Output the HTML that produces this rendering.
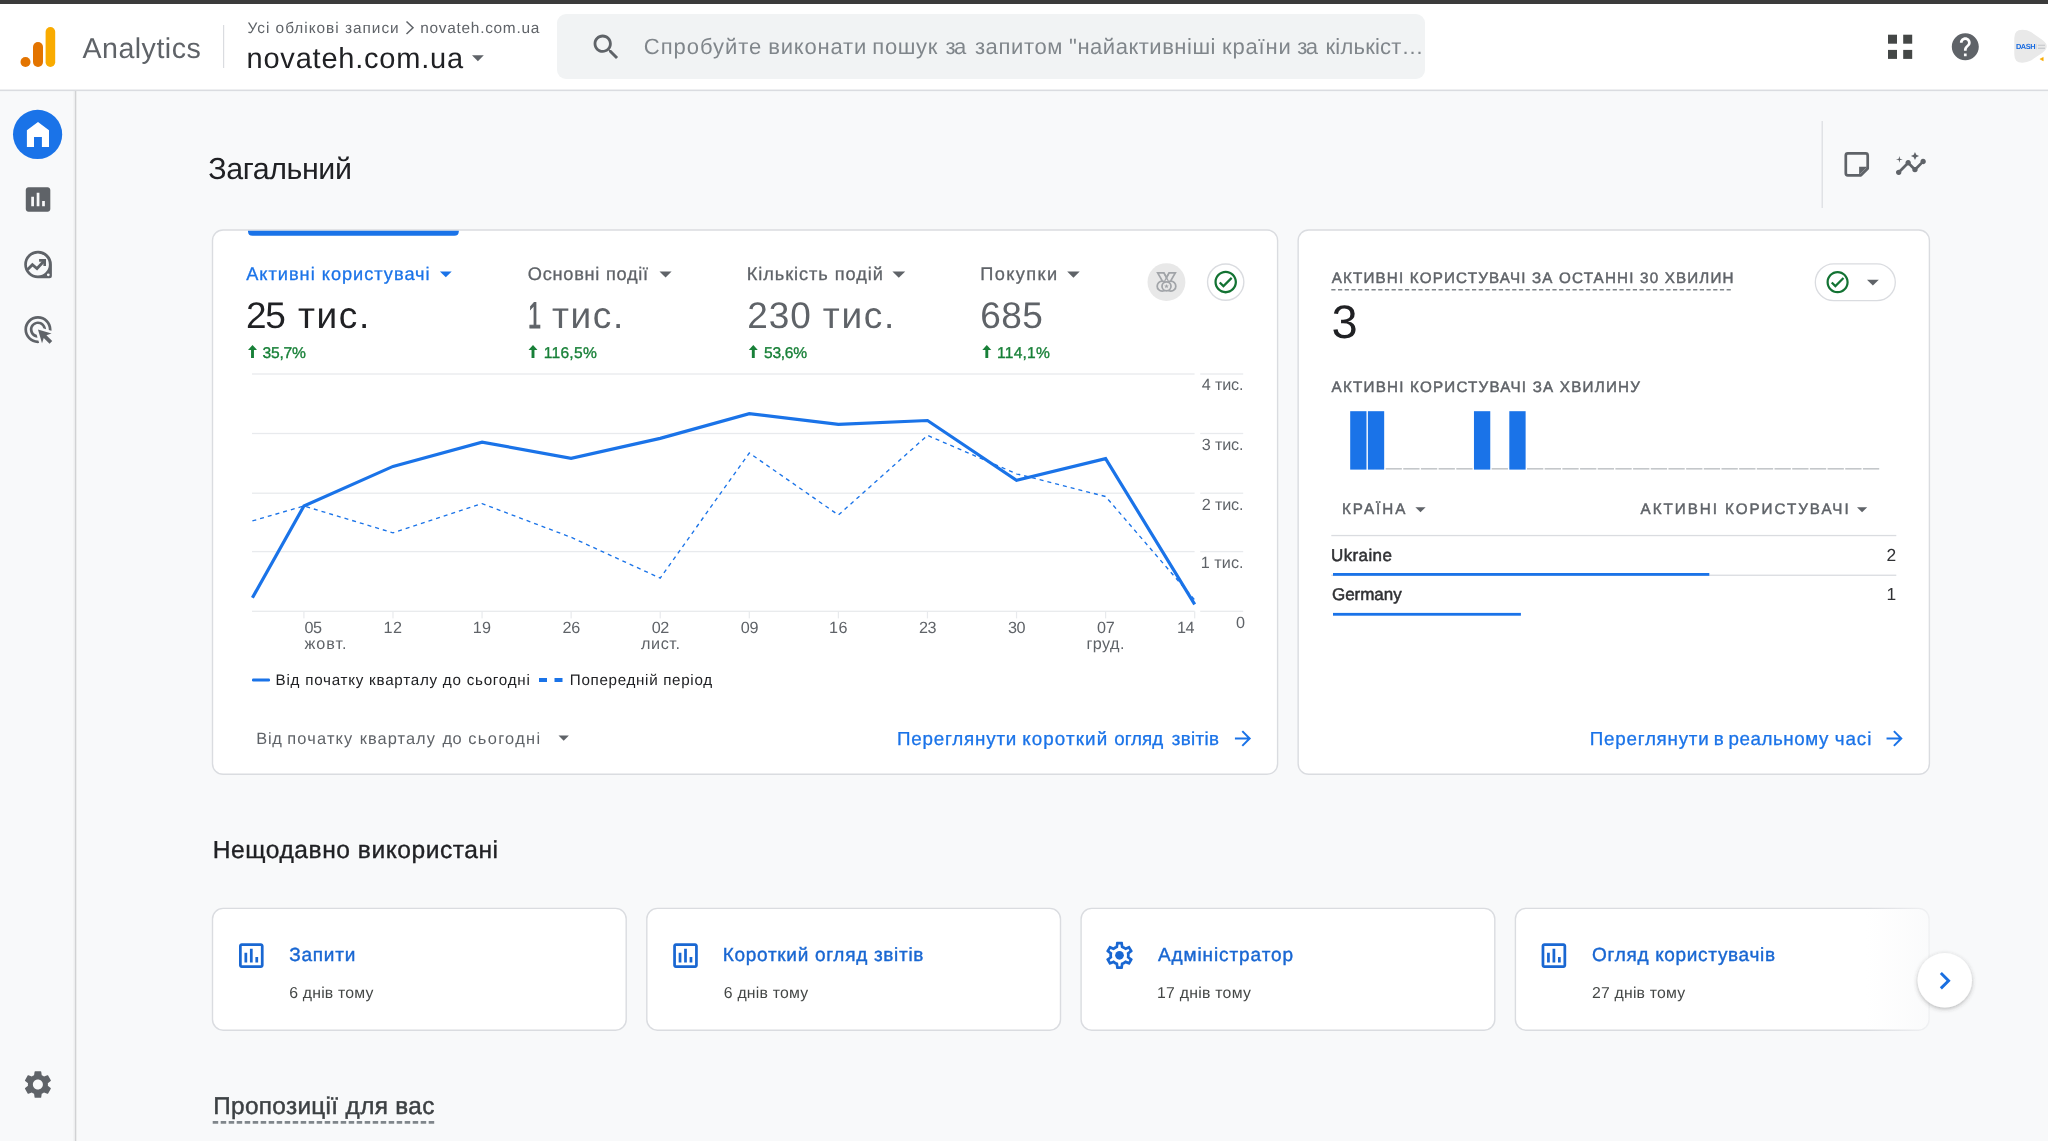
<!DOCTYPE html>
<html lang="uk">
<head>
<meta charset="utf-8">
<title>Analytics | Загальний</title>
<style>
html,body{margin:0;padding:0;}
body{width:2048px;height:1141px;overflow:hidden;background:#f8f9fa;position:relative;font-family:"Liberation Sans",sans-serif;}
.t{position:absolute;white-space:nowrap;line-height:1;font-family:"Liberation Sans",sans-serif;}
.abs{position:absolute;}
#topbar{left:0;top:0;width:2048px;height:3.5px;background:#3b3b3b;}
#header{left:0;top:3.5px;width:2048px;height:86.5px;background:#fff;}
#sidebar{left:0;top:91px;width:75px;height:1050px;background:#f8f9fa;}
#search{left:556.7px;top:14px;width:868.8px;height:65px;background:#f1f3f4;border-radius:9px;}
.card{box-sizing:border-box;}
#card1{left:211.7px;top:229.5px;width:1066.7px;height:545px;overflow:hidden;}
#card2{left:1297.8px;top:229.5px;width:631.8px;height:545px;}
.rc{top:908px;width:415.4px;height:123px;}
svg.ov{position:absolute;left:0;top:0;}
h1{margin:0;font-weight:400;font-size:inherit;}
header,section,aside,h1{display:block;}
</style>
</head>
<body>
<div id="topbar" class="abs"></div>
<div id="header" class="abs"></div>
<div id="search" class="abs"></div>
<div id="sidebar" class="abs"></div>
<div id="card1" class="abs card"></div>
<div id="card2" class="abs card"></div>
<div class="abs card rc" style="left:211.7px"></div>
<div class="abs card rc" style="left:645.9px"></div>
<div class="abs card rc" style="left:1080.1px"></div>
<div class="abs card rc" style="left:1514.3px"></div>
<svg class="ov" width="2048" height="1141" viewBox="0 0 2048 1141">
<defs><linearGradient id="sbsh" x1="0" x2="1" y1="0" y2="0"><stop offset="0" stop-color="#000" stop-opacity="0"/><stop offset="1" stop-color="#000" stop-opacity=".06"/></linearGradient></defs>
<rect x="72.6" y="91" width="2.6" height="1050" fill="url(#sbsh)"/>
<rect x="75.05" y="91" width="1.25" height="1050" fill="#cfd0d2"/>
<rect x="0" y="89.55" width="2048" height="1.55" fill="#dadce0"/>
<rect x="212.5" y="230" width="1065.1" height="544.3" rx="10.6" fill="#fff" stroke="#dadce0" stroke-width="1.4"/>
<rect x="1298.15" y="230" width="631.25" height="544.3" rx="10.6" fill="#fff" stroke="#dadce0" stroke-width="1.4"/>
<path d="M248 230.7 H458.8 V231.3 Q458.8 235.8 454.3 235.8 H252.5 Q248 235.8 248 231.3z" fill="#1a73e8"/>
<rect x="212.50" y="908.4" width="413.7" height="121.8" rx="10.6" fill="#fff" stroke="#dadce0" stroke-width="1.4"/>
<rect x="646.80" y="908.4" width="413.7" height="121.8" rx="10.6" fill="#fff" stroke="#dadce0" stroke-width="1.4"/>
<rect x="1081.10" y="908.4" width="413.7" height="121.8" rx="10.6" fill="#fff" stroke="#dadce0" stroke-width="1.4"/>
<rect x="1515.40" y="908.4" width="413.7" height="121.8" rx="10.6" fill="#fff" stroke="#dadce0" stroke-width="1.4"/>
<defs><linearGradient id="fade" x1="0" x2="1" y1="0" y2="0"><stop offset="0" stop-color="#f8f9fa" stop-opacity="0"/><stop offset="1" stop-color="#f8f9fa" stop-opacity="1"/></linearGradient><filter id="sh" x="-30%" y="-30%" width="160%" height="170%"><feDropShadow dx="0" dy="1.4" stdDeviation="2" flood-color="#3c4043" flood-opacity=".38"/></filter></defs>
<rect x="1866" y="900" width="77" height="140" fill="url(#fade)" opacity=".88"/>
<circle cx="1944.8" cy="980.3" r="27.2" fill="#fff" filter="url(#sh)"/>
<circle cx="25.5" cy="62" r="5" fill="#e37400"/>
<rect x="33" y="42" width="10" height="25" rx="5" fill="#e37400"/>
<rect x="45.6" y="27" width="9.6" height="40" rx="4.8" fill="#f9ab00"/>
<rect x="223" y="25" width="1.2" height="43" fill="#dadce0"/>
<path d="M406.5 21.5 L413 27.8 L406.5 34" fill="none" stroke="#5f6368" stroke-width="1.5"/>
<path d="M472 55.3 h11.8 l-5.9 6z" fill="#5f6368"/>
<g transform="translate(589.40 30.40) scale(1.4000)" fill="#5f6368" ><path d="M15.5 14h-.79l-.28-.27C15.41 12.59 16 11.11 16 9.5 16 5.91 13.09 3 9.5 3S3 5.91 3 9.5 5.91 16 9.5 16c1.61 0 3.09-.59 4.23-1.57l.27.28v.79l5 4.99L20.49 19l-4.99-5zm-6 0C7.01 14 5 11.99 5 9.5S7.01 5 9.5 5 14 7.01 14 9.5 11.99 14 9.5 14z"/></g>
<rect x="1888" y="34.7" width="9" height="9" fill="#444746"/>
<rect x="1888" y="49.9" width="9" height="9" fill="#444746"/>
<rect x="1903.2" y="34.7" width="9" height="9" fill="#444746"/>
<rect x="1903.2" y="49.9" width="9" height="9" fill="#444746"/>
<g transform="translate(1949.10 30.50) scale(1.3500)" fill="#5f6368" ><path d="M12 2C6.48 2 2 6.48 2 12s4.48 10 10 10 10-4.48 10-10S17.52 2 12 2zm1 17h-2v-2h2v2zm2.07-7.75l-.9.92C13.45 12.9 13 13.5 13 15h-2v-.5c0-1.1.45-2.1 1.17-2.83l1.24-1.26c.37-.36.59-.86.59-1.41 0-1.1-.9-2-2-2s-2 .9-2 2H8c0-2.21 1.79-4 4-4s4 1.79 4 4c0 .88-.36 1.68-.93 2.25z"/></g>
<path d="M2014.3 38 Q2014.3 29.6 2022.5 29.8 Q2027 29.9 2031 32 L2042.5 39.9 Q2046.8 43.2 2046.8 46.3 Q2046.8 49.4 2042.5 52.7 L2031 60.5 Q2027 62.6 2022.5 62.7 Q2014.3 62.9 2014.3 54.5 Z" fill="#e9e9e9"/>
<path d="M2043.3 57.3 V60.9 L2039.9 59.1z" fill="#f9ab00" stroke="#f9ab00" stroke-width="0.4" stroke-linejoin="round"/>
<rect x="2036.4" y="43.8" width="0.5" height="5.6" fill="#c4c7ca"/><rect x="2038" y="44.7" width="7" height="1.2" fill="#c9cbce"/><rect x="2038" y="47.6" width="7" height="1.4" fill="#c9cbce"/>
<circle cx="37.6" cy="134.4" r="24.6" fill="#1a73e8"/>
<path d="M38 121.9 L26.9 130.3 V146.9 H34 V137 H41.9 V146.9 H49 V130.3z" fill="#fff"/>
<g transform="translate(21.70 183.20) scale(1.3625)" fill="#5f6368" ><path d="M19 3H5c-1.1 0-2 .9-2 2v14c0 1.1.9 2 2 2h14c1.1 0 2-.9 2-2V5c0-1.1-.9-2-2-2zM9 17H7v-7h2v7zm4 0h-2V7h2v10zm4 0h-2v-4h2v4z"/></g>
<path fill-rule="evenodd" fill="#5f6368" d="M37.9 250.8 A13.7 13.7 0 1 0 37.9 278.2 H49.4 Q51.9 278.2 51.9 275.7 V264.5 A13.7 13.7 0 0 0 37.9 250.8 Z M37.9 253.5 a11 11 0 1 1 0 22 a11 11 0 1 1 0 -22 Z M48.3 273.4 a1.4 1.4 0 1 1 0 2.8 a1.4 1.4 0 1 1 0 -2.8z"/>
<polyline points="27.6,269.6 32.4,264.7 37,268.5 44.3,260.8" fill="none" stroke="#5f6368" stroke-width="2.8"/>
<path d="M39.1 259.1 H46 V265.9 H43.4 V261.7 H39.1z" fill="#5f6368"/>
<g transform="translate(21.65 313.25) scale(1.3583)" fill="#5f6368" ><path d="M11.71 17.99C8.53 17.84 6 15.22 6 12c0-3.31 2.69-6 6-6 3.22 0 5.84 2.53 5.99 5.71l-2.1-.63C15.48 9.31 13.89 8 12 8c-2.21 0-4 1.79-4 4 0 1.89 1.31 3.48 3.08 3.89l.63 2.1zM22 12c0 .3-.01.6-.04.9l-1.97-.59c.01-.1.01-.21.01-.31 0-4.42-3.58-8-8-8s-8 3.58-8 8 3.58 8 8 8c.1 0 .21 0 .31-.01l.59 1.97c-.3.03-.6.04-.9.04-5.52 0-10-4.48-10-10S6.48 2 12 2s10 4.48 10 10zm-3.77 4.26L22 15l-10-3 3 10 1.26-3.77 4.27 4.27 1.98-1.98-4.28-4.26z"/></g>
<g transform="translate(21.20 1067.80) scale(1.3917)" fill="#5f6368" ><path d="M19.14 12.94c.04-.3.06-.61.06-.94 0-.32-.02-.64-.07-.94l2.03-1.58c.18-.14.23-.41.12-.61l-1.92-3.32c-.12-.22-.37-.29-.59-.22l-2.39.96c-.5-.38-1.03-.7-1.62-.94l-.36-2.54c-.04-.24-.24-.41-.48-.41h-3.84c-.24 0-.43.17-.47.41l-.36 2.54c-.59.24-1.13.57-1.62.94l-2.39-.96c-.22-.08-.47 0-.59.22L2.74 8.87c-.12.21-.08.47.12.61l2.03 1.58c-.05.3-.09.63-.09.94s.02.64.07.94l-2.03 1.58c-.18.14-.23.41-.12.61l1.92 3.32c.12.22.37.29.59.22l2.39-.96c.5.38 1.03.7 1.62.94l.36 2.54c.05.24.24.41.48.41h3.84c.24 0 .44-.17.47-.41l.36-2.54c.59-.24 1.13-.56 1.62-.94l2.39.96c.22.08.47 0 .59-.22l1.92-3.32c.12-.22.07-.47-.12-.61l-2.01-1.58zM12 15.6c-1.98 0-3.6-1.62-3.6-3.6s1.62-3.6 3.6-3.6 3.6 1.62 3.6 3.6-1.62 3.6-3.6 3.6z"/></g>
<rect x="1821.6" y="121" width="1.2" height="87" fill="#dadce0"/>
<g transform="translate(1844.4 152)" fill="none" stroke="#5f6368" stroke-width="2.7" stroke-linejoin="round"><path d="M3.4 1.4 H21.2 Q23.3 1.4 23.3 3.5 V16.5 L16.5 23.3 H3.4 Q1.4 23.3 1.4 21.2 V3.5 Q1.4 1.4 3.4 1.4z"/><path d="M14.7 23 V14.7 H23z" fill="#5f6368" stroke="none"/></g>
<g transform="translate(1894.60 147.90) scale(1.3583)" fill="#5f6368" ><path d="M21 8c-1.45 0-2.26 1.44-1.93 2.51l-3.55 3.56c-.3-.09-.74-.09-1.04 0l-2.55-2.55C12.27 10.45 11.46 9 10 9c-1.45 0-2.27 1.44-1.93 2.52l-4.56 4.55C2.44 15.74 1 16.55 1 18c0 1.1.9 2 2 2 1.45 0 2.26-1.44 1.93-2.51l4.55-4.56c.3.09.74.09 1.04 0l2.55 2.55C12.73 16.55 13.54 18 15 18c1.45 0 2.27-1.44 1.93-2.52l3.56-3.55c1.07.33 2.51-.48 2.51-1.93 0-1.1-.9-2-2-2z"/><path d="M15 9l.94-2.07L18 6l-2.06-.93L15 3l-.92 2.07L12 6l2.08.93z"/><path d="M3.5 11L4 9l2-.5L4 8l-.5-2L3 8l-2 .5L3 9z"/></g>
<path d="M439.9 271.4 h11.8 l-5.90 5.90z" fill="#1a73e8"/>
<path d="M659.5 271.4 h12.1 l-6.05 6.05z" fill="#5f6368"/>
<path d="M892.4 271.4 h12.8 l-6.40 6.40z" fill="#5f6368"/>
<path d="M1067.2 271.4 h12.5 l-6.25 6.25z" fill="#5f6368"/>
<path d="M252.50 344.9 L257.00 349.9 H253.95 V357.9 H251.05 V349.9 H248.00z" fill="#188038"/>
<path d="M533.00 344.9 L537.50 349.9 H534.45 V357.9 H531.55 V349.9 H528.50z" fill="#188038"/>
<path d="M753.30 344.9 L757.80 349.9 H754.75 V357.9 H751.85 V349.9 H748.80z" fill="#188038"/>
<path d="M986.80 344.9 L991.30 349.9 H988.25 V357.9 H985.35 V349.9 H982.30z" fill="#188038"/>
<circle cx="1166.45" cy="282.1" r="18.95" fill="#e8e8e8"/>
<g fill="none" stroke="#a1a4a8" stroke-width="1.75"><path d="M1162.3 280.9 L1157.7 272.9 H1163.9 L1166.5 277.7 L1169.1 272.9 H1175.3 L1170.7 280.9"/><path d="M1163.9 272.9 L1168.3 281 M1169.1 272.9 L1164.7 281" stroke-width="1.3"/><circle cx="1162.2" cy="286.2" r="5.0"/><circle cx="1170.8" cy="286.2" r="5.0"/><circle cx="1166.5" cy="286.3" r="4.5" fill="#e8e8e8"/></g>
<path d="M1166.5 283.9 l0.62 1.55 1.66 0.12 -1.28 1.07 0.41 1.62 -1.41 -0.89 -1.41 0.89 0.41 -1.62 -1.28 -1.07 1.66 -0.12z" fill="#a1a4a8"/>
<circle cx="1225.7" cy="282.1" r="18.15" fill="#fff" stroke="#dadce0" stroke-width="1.4"/>
<g transform="translate(1212.17 268.57) scale(1.1275)" fill="#137333" ><path d="M12 2C6.48 2 2 6.48 2 12s4.48 10 10 10 10-4.48 10-10S17.52 2 12 2zm0 18c-4.41 0-8-3.59-8-8s3.590-8 8-8 8 3.590 8 8-3.590 8-8 8zm4.590-12.420L10 14.170l-2.590-2.580L6 13l4 4 8-8z"/></g>
<rect x="252" y="373.35" width="942.6" height="1.3" fill="#e8eaed"/>
<rect x="1200.2" y="373.35" width="43" height="1.3" fill="#e8eaed"/>
<rect x="252" y="432.85" width="942.6" height="1.3" fill="#e8eaed"/>
<rect x="1200.2" y="432.85" width="43" height="1.3" fill="#e8eaed"/>
<rect x="252" y="492.55" width="942.6" height="1.3" fill="#e8eaed"/>
<rect x="1200.2" y="492.55" width="43" height="1.3" fill="#e8eaed"/>
<rect x="252" y="550.95" width="942.6" height="1.3" fill="#e8eaed"/>
<rect x="1200.2" y="550.95" width="43" height="1.3" fill="#e8eaed"/>
<rect x="252" y="610.65" width="942.6" height="1.3" fill="#e8eaed"/>
<rect x="1200.2" y="610.65" width="43" height="1.3" fill="#e8eaed"/>
<rect x="303.30" y="611.3" width="1.2" height="7.1" fill="#e8eaed"/>
<rect x="392.38" y="611.3" width="1.2" height="7.1" fill="#e8eaed"/>
<rect x="481.46" y="611.3" width="1.2" height="7.1" fill="#e8eaed"/>
<rect x="570.54" y="611.3" width="1.2" height="7.1" fill="#e8eaed"/>
<rect x="659.62" y="611.3" width="1.2" height="7.1" fill="#e8eaed"/>
<rect x="748.70" y="611.3" width="1.2" height="7.1" fill="#e8eaed"/>
<rect x="837.78" y="611.3" width="1.2" height="7.1" fill="#e8eaed"/>
<rect x="926.86" y="611.3" width="1.2" height="7.1" fill="#e8eaed"/>
<rect x="1015.94" y="611.3" width="1.2" height="7.1" fill="#e8eaed"/>
<rect x="1105.02" y="611.3" width="1.2" height="7.1" fill="#e8eaed"/>
<rect x="1194.10" y="611.3" width="1.2" height="7.1" fill="#e8eaed"/>
<polyline points="252.4,520.9 303.9,506.0 393.0,532.8 482.1,503.6 571.1,537.3 660.2,578.1 749.3,453.0 838.4,515.0 927.5,435.4 1016.5,473.8 1105.6,496.5 1194.7,600.0" fill="none" stroke="#1a73e8" stroke-width="1.35" stroke-dasharray="4 4"/>
<polyline points="252.4,597.8 303.9,506.0 393.0,466.4 482.1,442.2 571.1,458.3 660.2,438.4 749.3,413.6 838.4,424.4 927.5,420.5 1016.5,480.4 1105.6,458.6 1194.7,604.3" fill="none" stroke="#1a73e8" stroke-width="3.2" stroke-linejoin="miter"/>
<rect x="252" y="678.6" width="18" height="2.8" rx="1.2" fill="#1a73e8"/>
<rect x="539" y="678" width="8" height="4" fill="#1a73e8"/>
<rect x="554.5" y="678" width="8" height="4" fill="#1a73e8"/>
<path d="M558.5 735.6 h10.4 l-5.2 5.2z" fill="#5f6368"/>
<g transform="translate(1230.90 726.40) scale(1.0083)" fill="#1a73e8" ><path d="M12 4l-1.41 1.41L16.17 11H4v2h12.17l-5.58 5.59L12 20l8-8z"/></g>
<g transform="translate(1882.50 726.40) scale(1.0083)" fill="#1a73e8" ><path d="M12 4l-1.41 1.41L16.17 11H4v2h12.17l-5.58 5.59L12 20l8-8z"/></g>
<line x1="1331.3" y1="289.8" x2="1733" y2="289.8" stroke="#80868b" stroke-width="1.6" stroke-dasharray="4.2 2.5"/>
<rect x="1815.3" y="263.8" width="80" height="36.8" rx="18.4" fill="#fff" stroke="#dadce0" stroke-width="1.3"/>
<g transform="translate(1824.30 268.90) scale(1.1083)" fill="#137333" ><path d="M12 2C6.48 2 2 6.48 2 12s4.48 10 10 10 10-4.48 10-10S17.52 2 12 2zm0 18c-4.41 0-8-3.59-8-8s3.590-8 8-8 8 3.590 8 8-3.590 8-8 8zm4.590-12.420L10 14.170l-2.590-2.580L6 13l4 4 8-8z"/></g>
<path d="M1867 279.7 h11.8 l-5.9 5.8z" fill="#5f6368"/>
<rect x="1350.20" y="411.2" width="16.3" height="58.4" fill="#1a73e8"/>
<rect x="1367.88" y="411.2" width="16.3" height="58.4" fill="#1a73e8"/>
<rect x="1385.56" y="468" width="16.3" height="1.6" fill="#c4c7ca"/>
<rect x="1403.24" y="468" width="16.3" height="1.6" fill="#c4c7ca"/>
<rect x="1420.92" y="468" width="16.3" height="1.6" fill="#c4c7ca"/>
<rect x="1438.60" y="468" width="16.3" height="1.6" fill="#c4c7ca"/>
<rect x="1456.28" y="468" width="16.3" height="1.6" fill="#c4c7ca"/>
<rect x="1473.96" y="411.2" width="16.3" height="58.4" fill="#1a73e8"/>
<rect x="1491.64" y="468" width="16.3" height="1.6" fill="#c4c7ca"/>
<rect x="1509.32" y="411.2" width="16.3" height="58.4" fill="#1a73e8"/>
<rect x="1527.00" y="468" width="16.3" height="1.6" fill="#c4c7ca"/>
<rect x="1544.68" y="468" width="16.3" height="1.6" fill="#c4c7ca"/>
<rect x="1562.36" y="468" width="16.3" height="1.6" fill="#c4c7ca"/>
<rect x="1580.04" y="468" width="16.3" height="1.6" fill="#c4c7ca"/>
<rect x="1597.72" y="468" width="16.3" height="1.6" fill="#c4c7ca"/>
<rect x="1615.40" y="468" width="16.3" height="1.6" fill="#c4c7ca"/>
<rect x="1633.08" y="468" width="16.3" height="1.6" fill="#c4c7ca"/>
<rect x="1650.76" y="468" width="16.3" height="1.6" fill="#c4c7ca"/>
<rect x="1668.44" y="468" width="16.3" height="1.6" fill="#c4c7ca"/>
<rect x="1686.12" y="468" width="16.3" height="1.6" fill="#c4c7ca"/>
<rect x="1703.80" y="468" width="16.3" height="1.6" fill="#c4c7ca"/>
<rect x="1721.48" y="468" width="16.3" height="1.6" fill="#c4c7ca"/>
<rect x="1739.16" y="468" width="16.3" height="1.6" fill="#c4c7ca"/>
<rect x="1756.84" y="468" width="16.3" height="1.6" fill="#c4c7ca"/>
<rect x="1774.52" y="468" width="16.3" height="1.6" fill="#c4c7ca"/>
<rect x="1792.20" y="468" width="16.3" height="1.6" fill="#c4c7ca"/>
<rect x="1809.88" y="468" width="16.3" height="1.6" fill="#c4c7ca"/>
<rect x="1827.56" y="468" width="16.3" height="1.6" fill="#c4c7ca"/>
<rect x="1845.24" y="468" width="16.3" height="1.6" fill="#c4c7ca"/>
<rect x="1862.92" y="468" width="16.3" height="1.6" fill="#c4c7ca"/>
<path d="M1415.4 507.2 h10.2 l-5.1 5.1z" fill="#5f6368"/>
<path d="M1857 507.2 h10.2 l-5.1 5.1z" fill="#5f6368"/>
<rect x="1331.3" y="534.9" width="565" height="1.3" fill="#dadce0"/>
<rect x="1331.3" y="574.6" width="565" height="1.3" fill="#dadce0"/>
<rect x="1333" y="573" width="376.3" height="2.8" fill="#1a73e8"/>
<rect x="1333" y="612.9" width="187.9" height="2.8" fill="#1a73e8"/>
<g transform="translate(234.90 939.20) scale(1.3667)" fill="#1967d2" ><path d="M9 17H7v-7h2v7zm4 0h-2V7h2v10zm4 0h-2v-4h2v4zm2 2H5V5h14v14zm0-16H5c-1.1 0-2 .9-2 2v14c0 1.1.9 2 2 2h14c1.1 0 2-.9 2-2V5c0-1.1-.9-2-2-2z"/></g>
<g transform="translate(669.10 939.20) scale(1.3667)" fill="#1967d2" ><path d="M9 17H7v-7h2v7zm4 0h-2V7h2v10zm4 0h-2v-4h2v4zm2 2H5V5h14v14zm0-16H5c-1.1 0-2 .9-2 2v14c0 1.1.9 2 2 2h14c1.1 0 2-.9 2-2V5c0-1.1-.9-2-2-2z"/></g>
<g transform="translate(1537.50 939.20) scale(1.3667)" fill="#1967d2" ><path d="M9 17H7v-7h2v7zm4 0h-2V7h2v10zm4 0h-2v-4h2v4zm2 2H5V5h14v14zm0-16H5c-1.1 0-2 .9-2 2v14c0 1.1.9 2 2 2h14c1.1 0 2-.9 2-2V5c0-1.1-.9-2-2-2z"/></g>
<g transform="translate(1103.20 939.00) scale(1.3583)" fill="#1967d2" ><path d="M19.43 12.98c.04-.32.07-.64.07-.98 0-.34-.03-.66-.07-.98l2.11-1.65c.19-.15.24-.42.12-.64l-2-3.46c-.09-.16-.26-.25-.44-.25-.06 0-.12.01-.17.03l-2.49 1c-.52-.4-1.08-.73-1.69-.98l-.38-2.65C14.46 2.18 14.25 2 14 2h-4c-.25 0-.46.18-.49.42l-.38 2.65c-.61.25-1.17.59-1.69.98l-2.49-1c-.06-.02-.12-.03-.18-.03-.17 0-.34.09-.43.25l-2 3.46c-.13.22-.07.49.12.64l2.11 1.65c-.04.32-.07.65-.07.98 0 .33.03.66.07.98l-2.11 1.65c-.19.15-.24.42-.12.64l2 3.46c.09.16.26.25.44.25.06 0 .12-.01.17-.03l2.49-1c.52.4 1.08.73 1.69.98l.38 2.65c.03.24.24.42.49.42h4c.25 0 .46-.18.49-.42l.38-2.65c.61-.25 1.17-.59 1.69-.98l2.49 1c.06.02.12.03.18.03.17 0 .34-.09.43-.25l2-3.46c.12-.22.07-.49-.12-.64l-2.11-1.65zm-1.98-1.71c.04.31.05.52.05.73 0 .21-.02.43-.05.73l-.14 1.13.89.7 1.08.84-.7 1.21-1.27-.51-1.04-.42-.9.68c-.43.32-.84.56-1.25.73l-1.06.43-.16 1.13-.2 1.35h-1.4l-.19-1.35-.16-1.13-1.06-.43c-.43-.18-.83-.41-1.23-.71l-.91-.7-1.06.43-1.27.51-.7-1.21 1.08-.84.89-.7-.14-1.13c-.03-.31-.05-.54-.05-.74s.02-.43.05-.73l.14-1.13-.89-.7-1.08-.84.7-1.21 1.27.51 1.04.42.9-.68c.43-.32.84-.56 1.25-.73l1.06-.43.16-1.13.2-1.35h1.39l.19 1.35.16 1.13 1.06.43c.43.18.83.41 1.23.71l.91.7 1.06-.43 1.27-.51.7 1.21-1.07.85-.89.7.14 1.13z"/><circle cx="12" cy="12" r="3.2"/></g>
<g transform="translate(1927.30 963.15) scale(1.4583)" fill="#1a6fe0" ><path d="M10 6L8.59 7.41 13.17 12l-4.58 4.590L10 18l6-6z"/></g>
<line x1="212.7" y1="1122.4" x2="434.2" y2="1122.4" stroke="#80868b" stroke-width="2.7" stroke-dasharray="5.5 2.5"/>
</svg>
<div id="texts" style="position:absolute;left:0;top:0;width:2048px;height:1141px;will-change:transform;text-rendering:geometricPrecision;">
<header>
<div class="t" style="font-size:28.6px;color:#5f6368;letter-spacing:0.472px;left:82.50px;top:35.00px;">Analytics</div>
<div class="t" style="font-size:15.4px;color:#5f6368;letter-spacing:0.989px;left:247.50px;top:21.00px;">Усі облікові записи</div>
<div class="t" style="font-size:15.4px;color:#5f6368;letter-spacing:0.726px;left:420.30px;top:21.00px;">novateh.com.ua</div>
<div class="t" style="font-size:29px;color:#202124;letter-spacing:0.790px;left:246.50px;top:45.00px;">novateh.com.ua</div>
<div class="ph"><span class="t" style="font-size:22px;color:#80868b;letter-spacing:0.962px;left:643.80px;top:36.00px;">Спробуйте</span> <span class="t" style="font-size:22px;color:#80868b;letter-spacing:0.805px;left:768.20px;top:36.00px;">виконати</span> <span class="t" style="font-size:22px;color:#80868b;letter-spacing:0.676px;left:872.30px;top:36.00px;">пошук</span> <span class="t" style="font-size:22px;color:#80868b;letter-spacing:-1.587px;left:945.60px;top:36.00px;">за</span> <span class="t" style="font-size:22px;color:#80868b;letter-spacing:0.627px;left:974.90px;top:36.00px;">запитом</span> <span class="t" style="font-size:22px;color:#80868b;letter-spacing:0.514px;left:1069.10px;top:36.00px;">"найактивніші</span> <span class="t" style="font-size:22px;color:#80868b;letter-spacing:0.809px;left:1222.00px;top:36.00px;">країни</span> <span class="t" style="font-size:22px;color:#80868b;letter-spacing:-1.587px;left:1297.20px;top:36.00px;">за</span> <span class="t" style="font-size:22px;color:#80868b;letter-spacing:0.212px;left:1325.50px;top:36.00px;">кількіст…</span></div>
</header>
<h1>
<div class="t" style="font-size:30.4px;color:#202124;letter-spacing:-0.400px;left:208.20px;top:154.00px;">Загальний</div>
</h1>
<section class="overview">
<div class="t" style="font-size:18.2px;color:#1a73e8;-webkit-text-stroke:0.3px #1a73e8;letter-spacing:0.994px;left:246.20px;top:265.00px;">Активні користувачі</div>
<div class="ph"><span class="t" style="font-size:37px;color:#202124;letter-spacing:-1.278px;left:246.00px;top:297.00px;">25</span> <span class="t" style="font-size:37px;color:#202124;letter-spacing:1.562px;left:298.10px;top:297.00px;">тис.</span></div>
<div class="t" style="font-size:15.6px;color:#188038;-webkit-text-stroke:0.35px #188038;letter-spacing:-0.212px;left:262.50px;top:346.00px;">35,7%</div>
<div class="t" style="font-size:18.2px;color:#5f6368;-webkit-text-stroke:0.3px #5f6368;letter-spacing:0.740px;left:527.80px;top:265.00px;">Основні події</div>
<div class="ph"><span class="t" style="font-size:37px;color:#5f6368;-webkit-text-stroke:0.9px #5f6368;transform:scaleX(0.64);transform-origin:0 0;left:527.82px;top:297.00px;">1</span> <span class="t" style="font-size:37px;color:#5f6368;letter-spacing:1.629px;left:552.00px;top:297.00px;">тис.</span></div>
<div class="t" style="font-size:15.6px;color:#188038;-webkit-text-stroke:0.35px #188038;letter-spacing:0.267px;left:543.70px;top:346.00px;">116,5%</div>
<div class="t" style="font-size:18.2px;color:#5f6368;-webkit-text-stroke:0.3px #5f6368;letter-spacing:0.929px;left:746.80px;top:265.00px;">Кількість подій</div>
<div class="ph"><span class="t" style="font-size:37px;color:#5f6368;letter-spacing:0.922px;left:747.30px;top:297.00px;">230</span> <span class="t" style="font-size:37px;color:#5f6368;letter-spacing:1.662px;left:822.80px;top:297.00px;">тис.</span></div>
<div class="t" style="font-size:15.6px;color:#188038;-webkit-text-stroke:0.35px #188038;letter-spacing:-0.312px;left:764.10px;top:346.00px;">53,6%</div>
<div class="t" style="font-size:18.2px;color:#5f6368;-webkit-text-stroke:0.3px #5f6368;letter-spacing:1.400px;left:980.25px;top:265.00px;">Покупки</div>
<div class="t" style="font-size:37px;color:#5f6368;letter-spacing:0.397px;left:980.25px;top:297.00px;">685</div>
<div class="t" style="font-size:15.6px;color:#188038;-webkit-text-stroke:0.35px #188038;letter-spacing:0.207px;left:997.10px;top:346.00px;">114,1%</div>
<div class="t" style="font-size:16.2px;color:#5f6368;letter-spacing:-0.130px;left:1201.70px;top:377.00px;">4 тис.</div>
<div class="t" style="font-size:16.2px;color:#5f6368;letter-spacing:-0.130px;left:1201.70px;top:437.00px;">3 тис.</div>
<div class="t" style="font-size:16.2px;color:#5f6368;letter-spacing:-0.130px;left:1201.70px;top:497.00px;">2 тис.</div>
<div class="t" style="font-size:16.2px;color:#5f6368;letter-spacing:0.070px;left:1200.70px;top:555.00px;">1 тис.</div>
<div class="t" style="font-size:16.2px;color:#5f6368;left:1236.00px;top:615.00px;">0</div>
<div class="t" style="font-size:16.2px;color:#5f6368;letter-spacing:-0.503px;left:304.50px;top:620.00px;">05</div>
<div class="t" style="font-size:16.2px;color:#5f6368;letter-spacing:0.977px;left:304.50px;top:636.00px;">жовт.</div>
<div class="t" style="font-size:16.2px;color:#5f6368;letter-spacing:0.597px;left:383.50px;top:620.00px;">12</div>
<div class="t" style="font-size:16.2px;color:#5f6368;letter-spacing:0.197px;left:472.80px;top:620.00px;">19</div>
<div class="t" style="font-size:16.2px;color:#5f6368;letter-spacing:-0.403px;left:562.60px;top:620.00px;">26</div>
<div class="t" style="font-size:16.2px;color:#5f6368;letter-spacing:-0.403px;left:651.70px;top:620.00px;">02</div>
<div class="t" style="font-size:16.2px;color:#5f6368;letter-spacing:0.575px;left:641.05px;top:636.00px;">лист.</div>
<div class="t" style="font-size:16.2px;color:#5f6368;letter-spacing:-0.403px;left:740.80px;top:620.00px;">09</div>
<div class="t" style="font-size:16.2px;color:#5f6368;letter-spacing:0.597px;left:828.90px;top:620.00px;">16</div>
<div class="t" style="font-size:16.2px;color:#5f6368;letter-spacing:-0.403px;left:919.00px;top:620.00px;">23</div>
<div class="t" style="font-size:16.2px;color:#5f6368;letter-spacing:-0.403px;left:1008.00px;top:620.00px;">30</div>
<div class="t" style="font-size:16.2px;color:#5f6368;letter-spacing:-0.403px;left:1097.10px;top:620.00px;">07</div>
<div class="t" style="font-size:16.2px;color:#5f6368;letter-spacing:0.443px;left:1086.45px;top:636.00px;">груд.</div>
<div class="t" style="font-size:16.2px;color:#5f6368;letter-spacing:-0.503px;left:1176.90px;top:620.00px;">14</div>
<div class="t" style="font-size:15.2px;color:#202124;letter-spacing:0.749px;left:275.60px;top:673.00px;">Від початку кварталу до сьогодні</div>
<div class="t" style="font-size:15.2px;color:#202124;letter-spacing:0.680px;left:569.80px;top:673.00px;">Попередній період</div>
<div class="ph"><span class="t" style="font-size:16.4px;color:#5f6368;letter-spacing:0.663px;left:256.30px;top:731.00px;">Від</span> <span class="t" style="font-size:16.4px;color:#5f6368;letter-spacing:1.169px;left:287.30px;top:731.00px;">початку</span> <span class="t" style="font-size:16.4px;color:#5f6368;letter-spacing:1.062px;left:359.70px;top:731.00px;">кварталу</span> <span class="t" style="font-size:16.4px;color:#5f6368;letter-spacing:0.636px;left:442.40px;top:731.00px;">до</span> <span class="t" style="font-size:16.4px;color:#5f6368;letter-spacing:1.337px;left:468.30px;top:731.00px;">сьогодні</span></div>
<div class="ph"><span class="t" style="font-size:18.8px;color:#1a73e8;-webkit-text-stroke:0.3px #1a73e8;letter-spacing:0.803px;left:897.00px;top:730.00px;">Переглянути</span> <span class="t" style="font-size:18.8px;color:#1a73e8;-webkit-text-stroke:0.3px #1a73e8;letter-spacing:1.120px;left:1022.20px;top:730.00px;">короткий</span> <span class="t" style="font-size:18.8px;color:#1a73e8;-webkit-text-stroke:0.3px #1a73e8;letter-spacing:0.022px;left:1114.20px;top:730.00px;">огляд</span> <span class="t" style="font-size:18.8px;color:#1a73e8;-webkit-text-stroke:0.3px #1a73e8;letter-spacing:0.353px;left:1171.70px;top:730.00px;">звітів</span></div>
</section>
<section class="realtime">
<div class="t" style="font-size:15.2px;color:#5f6368;-webkit-text-stroke:0.45px #5f6368;letter-spacing:1.177px;left:1331.70px;top:271.00px;">АКТИВНІ КОРИСТУВАЧІ ЗА ОСТАННІ 30 ХВИЛИН</div>
<div class="t" style="font-size:47px;color:#202124;left:1331.60px;top:298.00px;">3</div>
<div class="t" style="font-size:15.2px;color:#5f6368;-webkit-text-stroke:0.45px #5f6368;letter-spacing:1.217px;left:1331.60px;top:380.00px;">АКТИВНІ КОРИСТУВАЧІ ЗА ХВИЛИНУ</div>
<div class="t" style="font-size:15.2px;color:#5f6368;-webkit-text-stroke:0.45px #5f6368;letter-spacing:2.024px;left:1341.90px;top:502.00px;">КРАЇНА</div>
<div class="t" style="font-size:15.2px;color:#5f6368;-webkit-text-stroke:0.45px #5f6368;letter-spacing:1.971px;left:1640.60px;top:502.00px;">АКТИВНІ КОРИСТУВАЧІ</div>
<div class="t" style="font-size:17px;color:#303134;-webkit-text-stroke:0.5px #303134;letter-spacing:0.379px;left:1331.00px;top:547.00px;">Ukraine</div>
<div class="t" style="font-size:17.4px;color:#303134;left:1886.40px;top:547.00px;">2</div>
<div class="t" style="font-size:17px;color:#303134;-webkit-text-stroke:0.5px #303134;letter-spacing:-0.035px;left:1332.00px;top:586.00px;">Germany</div>
<div class="t" style="font-size:17.4px;color:#303134;left:1886.60px;top:586.00px;">1</div>
<div class="ph"><span class="t" style="font-size:18.8px;color:#1a73e8;-webkit-text-stroke:0.3px #1a73e8;letter-spacing:0.763px;left:1589.80px;top:730.00px;">Переглянути</span> <span class="t" style="font-size:18.8px;color:#1a73e8;-webkit-text-stroke:0.3px #1a73e8;left:1713.80px;top:730.00px;">в</span> <span class="t" style="font-size:18.8px;color:#1a73e8;-webkit-text-stroke:0.3px #1a73e8;letter-spacing:0.573px;left:1728.40px;top:730.00px;">реальному</span> <span class="t" style="font-size:18.8px;color:#1a73e8;-webkit-text-stroke:0.3px #1a73e8;letter-spacing:0.960px;left:1834.70px;top:730.00px;">часі</span></div>
</section>
<section class="recent">
<div class="t" style="font-size:24.6px;color:#202124;-webkit-text-stroke:0.35px #202124;letter-spacing:0.530px;left:212.80px;top:839.00px;">Нещодавно використані</div>
<div class="t" style="font-size:19px;color:#1967d2;-webkit-text-stroke:0.4px #1967d2;letter-spacing:0.771px;left:289.20px;top:946.00px;">Запити</div>
<div class="t" style="font-size:15.8px;color:#444746;letter-spacing:0.211px;left:289.20px;top:986.00px;">6 днів тому</div>
<div class="t" style="font-size:19px;color:#1967d2;-webkit-text-stroke:0.4px #1967d2;letter-spacing:0.693px;left:722.80px;top:946.00px;">Короткий огляд звітів</div>
<div class="t" style="font-size:15.8px;color:#444746;letter-spacing:0.211px;left:723.80px;top:986.00px;">6 днів тому</div>
<div class="t" style="font-size:19px;color:#1967d2;-webkit-text-stroke:0.4px #1967d2;letter-spacing:0.906px;left:1157.90px;top:946.00px;">Адміністратор</div>
<div class="t" style="font-size:15.8px;color:#444746;letter-spacing:0.275px;left:1156.90px;top:986.00px;">17 днів тому</div>
<div class="t" style="font-size:19px;color:#1967d2;-webkit-text-stroke:0.4px #1967d2;letter-spacing:0.672px;left:1592.10px;top:946.00px;">Огляд користувачів</div>
<div class="t" style="font-size:15.8px;color:#444746;letter-spacing:0.184px;left:1592.10px;top:986.00px;">27 днів тому</div>
</section>
<section class="suggestions">
<div class="t" style="font-size:24.3px;color:#3c4043;-webkit-text-stroke:0.45px #3c4043;letter-spacing:0.363px;left:213.20px;top:1095.00px;">Пропозиції для вас</div>
</section>
<aside>
<div class="t" style="font-size:7.4px;color:#1267e0;font-weight:700;letter-spacing:-0.401px;left:2015.90px;top:43.00px;">DASH</div>
</aside>
</div>
</body>
</html>
